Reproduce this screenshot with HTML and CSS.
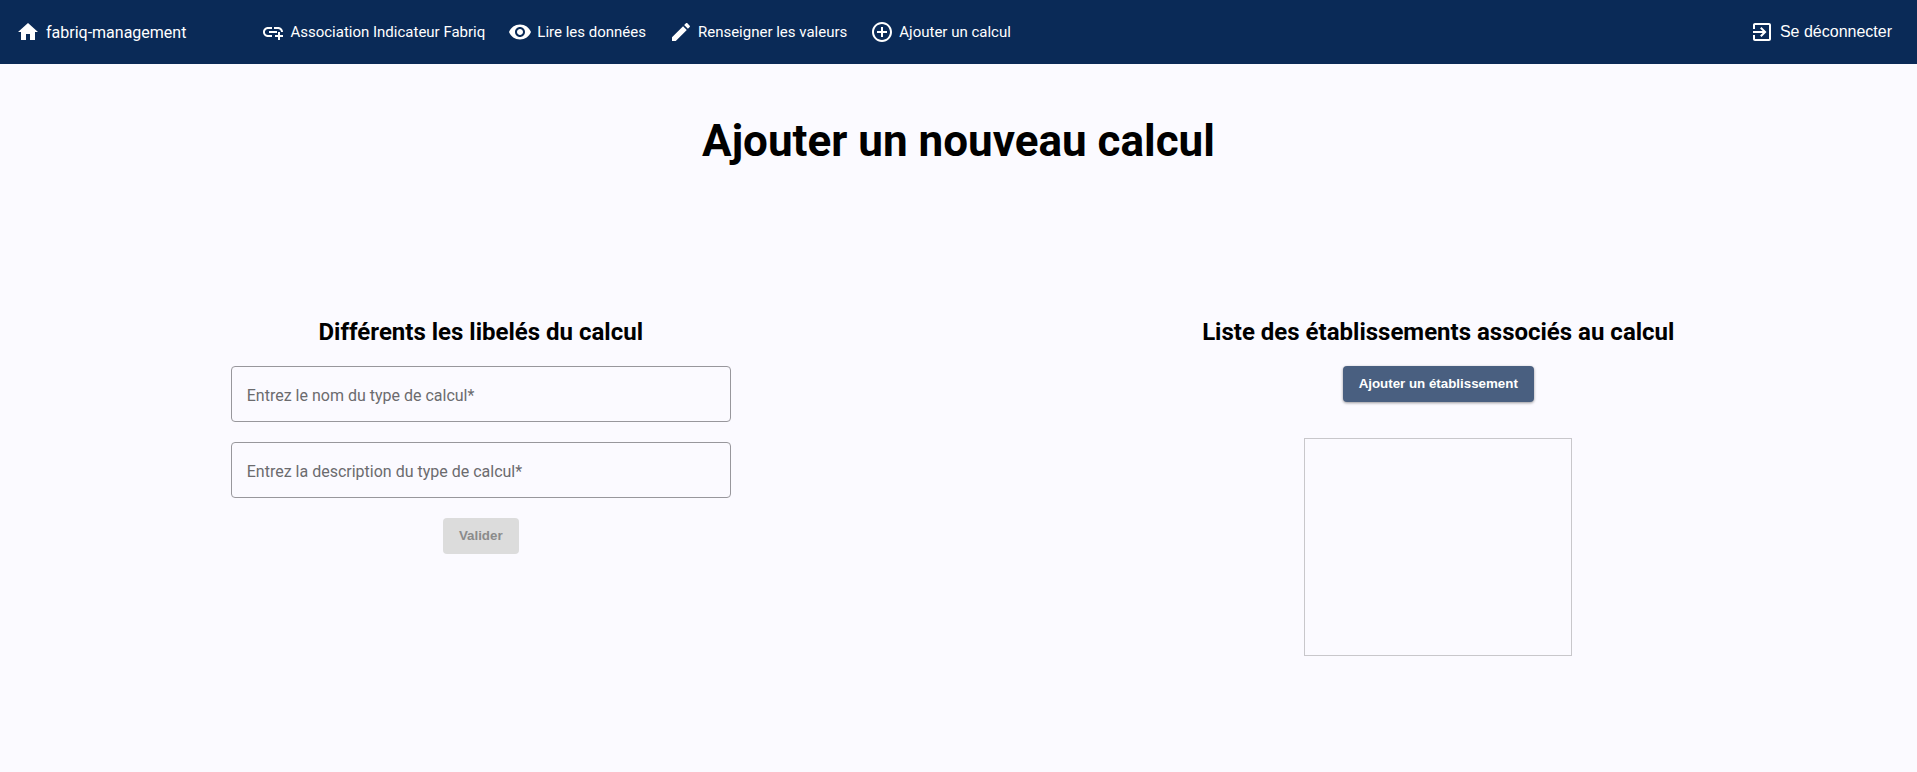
FILE: index.html
```html
<!DOCTYPE html>
<html lang="fr">
<head>
<meta charset="utf-8">
<meta name="viewport" content="width=device-width, initial-scale=1">
<title>fabriq-management</title>
<link rel="stylesheet" href="styles.css">
</head>
<body>
<header class="toolbar">
  <a class="brand" href="#">
    <svg class="icon" viewBox="0 0 24 24" aria-hidden="true"><path d="M10 20v-6h4v6h5v-8h3L12 3 2 12h3v8z"/></svg>
    <span>fabriq-management</span>
  </a>
  <nav class="menu">
    <a class="menu-link" href="#">
      <svg class="icon" viewBox="0 0 24 24" aria-hidden="true"><path d="M8 11h8v2H8zm12.1 1H22c0-2.760-2.240-5-5-5h-4v1.900h4c1.710 0 3.100 1.390 3.100 3.100zM3.900 12c0-1.710 1.390-3.100 3.100-3.100h4V7H7c-2.760 0-5 2.240-5 5s2.240 5 5 5h4v-1.900H7c-1.710 0-3.100-1.390-3.100-3.100zM19 12h-2v3h-3v2h3v3h2v-3h3v-2h-3z"/></svg>
      <span>Association Indicateur Fabriq</span>
    </a>
    <a class="menu-link" href="#">
      <svg class="icon" viewBox="0 0 24 24" aria-hidden="true"><path d="M12 4.500C7 4.500 2.730 7.610 1 12c1.730 4.390 6 7.500 11 7.500s9.270-3.110 11-7.500c-1.730-4.390-6-7.500-11-7.500zM12 17c-2.760 0-5-2.240-5-5s2.240-5 5-5 5 2.240 5 5-2.240 5-5 5zm0-8c-1.660 0-3 1.340-3 3s1.340 3 3 3 3-1.340 3-3-1.340-3-3-3z"/></svg>
      <span>Lire les données</span>
    </a>
    <a class="menu-link" href="#">
      <svg class="icon" viewBox="0 0 24 24" aria-hidden="true"><path d="M3 17.250V21h3.750L17.810 9.940l-3.750-3.750L3 17.250zM20.710 7.040c.39-.39.39-1.020 0-1.410l-2.340-2.340c-.39-.39-1.020-.39-1.410 0l-1.830 1.830 3.750 3.750 1.830-1.830z"/></svg>
      <span>Renseigner les valeurs</span>
    </a>
    <a class="menu-link" href="#">
      <svg class="icon" viewBox="0 0 24 24" aria-hidden="true"><path d="M13 7h-2v4H7v2h4v4h2v-4h4v-2h-4V7zm-1-5C6.480 2 2 6.480 2 12s4.480 10 10 10 10-4.480 10-10S17.520 2 12 2zm0 18c-4.410 0-8-3.590-8-8s3.590-8 8-8 8 3.590 8 8-3.590 8-8 8z"/></svg>
      <span>Ajouter un calcul</span>
    </a>
  </nav>
  <button class="logout" type="button">
    <svg class="icon" viewBox="0 0 24 24" aria-hidden="true"><path d="M10.090 15.590L11.500 17l5-5-5-5-1.410 1.410L12.670 11H3v2h9.670l-2.580 2.590zM19 3H5c-1.110 0-2 .9-2 2v4h2V5h14v14H5v-4H3v4c0 1.100.89 2 2 2h14c1.100 0 2-.9 2-2V5c0-1.100-.9-2-2-2z"/></svg>
    <span>Se déconnecter</span>
  </button>
</header>
<main class="page">
  <h1 class="page-title">Ajouter un nouveau calcul</h1>
  <div class="columns">
    <section class="column">
      <h2 class="column-title">Différents les libelés du calcul</h2>
      <form class="form">
        <input class="field" type="text" required aria-label="Entrez le nom du type de calcul" placeholder="Entrez le nom du type de calcul*">
        <input class="field" type="text" required aria-label="Entrez la description du type de calcul" placeholder="Entrez la description du type de calcul*">
        <button class="button" type="submit" disabled>Valider</button>
      </form>
    </section>
    <section class="column">
      <h2 class="column-title">Liste des établissements associés au calcul</h2>
      <button class="button button-primary" type="button">Ajouter un établissement</button>
      <div class="list-box"></div>
    </section>
  </div>
</main>
</body>
</html>
```
FILE: styles.css
```css
* {
  box-sizing: border-box;
}

body {
  margin: 0;
  background: #fbfaff;
  color: #000;
  font-family: Roboto, "Liberation Sans", sans-serif;
}

.toolbar {
  display: flex;
  align-items: center;
  min-height: 64px;
  padding: 0 25px 0 16px;
  background: #0a2a57;
  color: #fff;
}

.icon {
  flex: none;
  width: 24px;
  height: 24px;
  fill: currentColor;
}

.brand,
.menu-link,
.logout {
  display: flex;
  align-items: center;
  color: inherit;
  text-decoration: none;
  white-space: nowrap;
}

.brand {
  gap: 6px;
  font-size: 16px;
}

.menu {
  display: flex;
  gap: 23px;
  margin-left: 75px;
}

.menu-link {
  gap: 5px;
  font-size: 15px;
}

.logout {
  gap: 6px;
  margin-left: auto;
  padding: 0;
  border: 0;
  background: none;
  font-family: "Liberation Sans", Arial, sans-serif;
  font-size: 16px;
  cursor: pointer;
}

.page-title {
  margin: 49px 0 0;
  font-size: 44px;
  line-height: 56px;
  text-align: center;
}

.columns {
  display: grid;
  grid-template-columns: 1fr 1fr;
  margin-top: 148px;
  padding-left: 2px;
}

.column {
  display: flex;
  flex-direction: column;
  align-items: center;
}

.column-title {
  margin: 0 0 19px;
  font-size: 24px;
  line-height: 30px;
}

.form {
  display: flex;
  flex-direction: column;
  align-items: center;
  gap: 20px;
  width: 500px;
  max-width: 100%;
}

.field {
  width: 100%;
  height: 56px;
  padding: 2px 15px 0;
  border: 1px solid #98979c;
  border-radius: 4px;
  background: transparent;
  color: #000;
  font-family: inherit;
  font-size: 16px;
}

.field::placeholder {
  color: #6b6b6e;
  opacity: 1;
}

.button {
  height: 36px;
  padding: 0 16px 2px;
  border: 0;
  border-radius: 4px;
  background: #dcdcdc;
  color: #8b8b8b;
  font-family: "Liberation Sans", Arial, sans-serif;
  font-weight: 700;
}

.button-primary {
  background: #495f80;
  color: #fff;
  box-shadow: 0 1px 3px rgba(0, 0, 0, 0.4);
  cursor: pointer;
}

.list-box {
  width: 268px;
  height: 218px;
  margin-top: 36px;
  border: 1px solid #c8c7cb;
}
```
